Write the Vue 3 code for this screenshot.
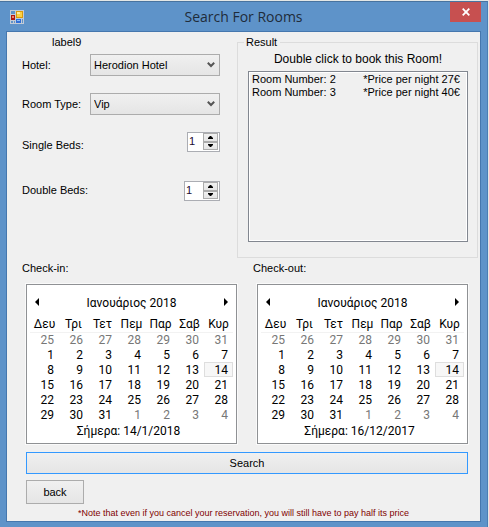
<script setup>
import { ref } from 'vue'

const hotel = ref('Herodion Hotel')
const roomType = ref('Vip')
const singleBeds = ref(1)
const doubleBeds = ref(1)
const chosenRoom = ref(null)

const gap = '\u00a0'.repeat(9)
const rooms = [
  { number: 2, price: 27 },
  { number: 3, price: 40 },
]

const weekdays = ['Δευ', 'Τρι', 'Τετ', 'Πεμ', 'Παρ', 'Σαβ', 'Κυρ']
const calendars = [
  { label: 'Check-in:', today: '14/1/2018' },
  { label: 'Check-out:', today: '16/12/2017' },
]

// January 2018 starts on a Monday, so the first row belongs to December.
const weeks = Array.from({ length: 6 }, (_, w) =>
  Array.from({ length: 7 }, (_, d) => {
    const n = w * 7 + d - 6
    if (n < 1) return { day: n + 31, other: true }
    if (n > 31) return { day: n - 31, other: true }
    return { day: n, other: false, selected: n === 14 }
  })
)
</script>

<template>
  <main class="window">
    <header class="titlebar">
      <svg class="app-icon" width="14" height="14" viewBox="0 0 14 14" aria-hidden="true">
        <rect width="14" height="14" fill="#c3cbd6" />
        <rect x="1" y="1" width="4" height="3" fill="#5f93c9" />
        <rect x="1" y="5" width="4" height="5" fill="#b01710" />
        <rect x="2" y="6" width="2" height="2" fill="#f0806a" />
        <rect x="6" y="1" width="7" height="7" fill="#d99a0c" />
        <rect x="7" y="2" width="5" height="5" fill="#fbd044" />
        <rect x="7" y="2" width="3" height="2" fill="#ffec9c" />
        <rect x="6" y="9" width="5" height="4" fill="#2f6fd8" />
        <rect x="7" y="10" width="3" height="1" fill="#8dbcf7" />
        <rect x="1" y="11" width="2" height="2" fill="#5f93c9" />
        <rect x="4" y="11" width="1" height="2" fill="#5f93c9" />
        <rect x="12" y="9" width="1" height="4" fill="#5f93c9" />
      </svg>
      <h1 class="title">Search For Rooms</h1>
      <button class="close" type="button" aria-label="Close">
        <svg width="8" height="8" viewBox="0 0 8 8" aria-hidden="true">
          <path d="M0.7 0.7 7.3 7.3M7.3 0.7 0.7 7.3" stroke="#fff" stroke-width="1.8" />
        </svg>
      </button>
    </header>

    <form class="client" @submit.prevent>
      <div class="top">
        <div class="filters">
          <p class="status">label9</p>
          <div class="field">
            <label for="hotel">Hotel:</label>
            <div class="combo">
              <select id="hotel" v-model="hotel">
                <option>Herodion Hotel</option>
              </select>
              <svg class="chevron" width="8" height="6" viewBox="0 0 8 6" aria-hidden="true">
                <path d="M0.8 0.8 4 4 7.2 0.8" fill="none" stroke="#555" stroke-width="2" />
              </svg>
            </div>
          </div>
          <div class="field">
            <label for="type">Room Type:</label>
            <div class="combo">
              <select id="type" v-model="roomType">
                <option>Vip</option>
              </select>
              <svg class="chevron" width="8" height="6" viewBox="0 0 8 6" aria-hidden="true">
                <path d="M0.8 0.8 4 4 7.2 0.8" fill="none" stroke="#555" stroke-width="2" />
              </svg>
            </div>
          </div>
          <div class="field beds">
            <label for="single">Single Beds:</label>
            <div class="spinner narrow">
              <input id="single" v-model.number="singleBeds" type="number" min="0" />
              <div class="steps">
                <button type="button" aria-label="More single beds" @click="singleBeds++">
                  <svg width="5" height="3" viewBox="0 0 5 3"><path d="M0 3V2L2 0h1l2 2v1z" /></svg>
                </button>
                <button type="button" aria-label="Fewer single beds" @click="singleBeds--">
                  <svg width="5" height="3" viewBox="0 0 5 3"><path d="M0 0v1l2 2h1l2-2V0z" /></svg>
                </button>
              </div>
            </div>
          </div>
          <div class="field beds">
            <label for="double">Double Beds:</label>
            <div class="spinner">
              <input id="double" v-model.number="doubleBeds" type="number" min="0" />
              <div class="steps">
                <button type="button" aria-label="More double beds" @click="doubleBeds++">
                  <svg width="5" height="3" viewBox="0 0 5 3"><path d="M0 3V2L2 0h1l2 2v1z" /></svg>
                </button>
                <button type="button" aria-label="Fewer double beds" @click="doubleBeds--">
                  <svg width="5" height="3" viewBox="0 0 5 3"><path d="M0 0v1l2 2h1l2-2V0z" /></svg>
                </button>
              </div>
            </div>
          </div>
        </div>

        <fieldset class="result">
          <legend>Result</legend>
          <label class="hint" for="rooms">Double click to book this Room!</label>
          <select id="rooms" v-model="chosenRoom" class="rooms" size="12">
            <option v-for="room in rooms" :key="room.number" :value="room.number">Room Number: {{ room.number }}{{ gap }}*Price per night {{ room.price }}€</option>
          </select>
        </fieldset>
      </div>

      <div class="calendars">
        <section v-for="cal in calendars" :key="cal.label" class="stay">
          <h2>{{ cal.label }}</h2>
          <div class="calendar">
            <div class="month">
              <button type="button" aria-label="Previous month">
                <svg width="4" height="8" viewBox="0 0 4 8"><path d="M4 0v8L0 4z" /></svg>
              </button>
              <span>Ιανουάριος 2018</span>
              <button type="button" aria-label="Next month">
                <svg width="4" height="8" viewBox="0 0 4 8"><path d="M0 0v8L4 4z" /></svg>
              </button>
            </div>
            <table>
              <thead>
                <tr>
                  <th v-for="d in weekdays" :key="d" scope="col">{{ d }}</th>
                </tr>
              </thead>
              <tbody>
                <tr v-for="(week, i) in weeks" :key="i">
                  <td
                    v-for="(cell, j) in week"
                    :key="j"
                    :class="{ other: cell.other, selected: cell.selected }"
                  >{{ cell.day }}</td>
                </tr>
              </tbody>
            </table>
            <p class="today">Σήμερα: {{ cal.today }}</p>
          </div>
        </section>
      </div>

      <div class="actions">
        <button class="btn search" type="submit">Search</button>
        <button class="btn back" type="button">back</button>
      </div>
      <p class="note">*Note that even if you cancel your reservation, you will still have to pay half its price</p>
    </form>
  </main>
</template>

<style>
body {
  margin: 0;
  background: #e4e7e6;
}
</style>

<style scoped>
* {
  box-sizing: border-box;
}

h1,
h2,
p {
  margin: 0;
  font-weight: 400;
}

.window {
  display: flex;
  flex-direction: column;
  min-height: calc(100vh - 1px);
  margin: 1px 1px 0 0;
  padding: 0 6px 5px;
  border-top: 1px solid #48739f;
  border-right: 1px solid #4a7db5;
  background: #5e93c9;
  color: #000;
  font: 11px/14px "Liberation Sans", Arial, sans-serif;
}

.titlebar {
  display: grid;
  grid-template-columns: 27px 1fr 31px;
  align-items: center;
  height: 29px;
  padding-left: 4px;
}

.title {
  color: #1f2c3a;
  font: 14px/20px "Open Sans", "Noto Sans", sans-serif;
  text-align: center;
}

.close {
  display: flex;
  align-items: center;
  justify-content: center;
  align-self: start;
  height: 20px;
  padding: 0;
  border: 0;
  background: #c75050;
}

.client {
  flex: 1;
  border: 1px solid #4577ae;
  background: #f0f0f0;
}

.top {
  display: grid;
  grid-template-columns: 230fr 243fr;
}

.filters {
  padding: 3px 17px 0 15px;
}

.status {
  padding-left: 30px;
}

.field {
  display: flex;
  align-items: center;
  justify-content: space-between;
  height: 22px;
  margin: 5px 0 17px;
}

.field + .field {
  margin-top: 0;
}

.combo {
  display: grid;
  align-items: center;
  width: 130px;
}

.combo > * {
  grid-area: 1 / 1;
}

.combo select {
  width: 100%;
  height: 22px;
  padding: 0 18px 0 3px;
  border: 1px solid #acacac;
  border-radius: 0;
  appearance: none;
  background: linear-gradient(#f0f0f0, #e5e5e5);
  color: inherit;
  font: inherit;
}

.chevron {
  justify-self: end;
  margin-right: 5px;
  pointer-events: none;
}

.beds {
  align-items: start;
  height: 20px;
  margin-bottom: 29px;
}

.beds label {
  padding-top: 6px;
}

.beds:last-child label {
  padding-top: 2px;
}

.spinner {
  display: flex;
  width: 36px;
  height: 20px;
  border: 1px solid #abadb3;
  background: #fff;
}

.spinner.narrow {
  width: 33px;
}

.spinner input {
  flex: 1;
  min-width: 0;
  height: 15px;
  padding: 0 0 0 1px;
  border: 0;
  background: none;
  appearance: textfield;
  color: #1c0a30;
  font: inherit;
}

.spinner input::-webkit-inner-spin-button {
  appearance: none;
}

.steps {
  display: grid;
  grid-template-rows: 1fr 1fr;
  width: 16px;
  padding: 0 1px 1px 0;
}

.steps button {
  display: flex;
  align-items: center;
  justify-content: center;
  padding: 0;
  border: 1px solid #acacac;
  background: linear-gradient(#f0f0f0, #e5e5e5);
}

.result {
  display: flex;
  flex-direction: column;
  min-width: 0;
  height: 223px;
  margin: 3px 2px 0 0;
  padding: 2px 9px 15px 10px;
  border: 1px solid #dcdcdc;
}

.result legend {
  margin-left: -4px;
  padding: 0 3px 0 2px;
}

.hint {
  padding-bottom: 4px;
  font-size: 12px;
  line-height: 16px;
  text-align: center;
}

.rooms {
  flex: 1;
  width: 100%;
  min-height: 0;
  padding: 1px;
  border: 1px solid #828790;
  border-radius: 0;
  outline: 0;
  background: #f0f0f0;
  box-shadow: inset 0 0 0 1px #fff;
  color: inherit;
  font: inherit;
  overflow: hidden;
}

.rooms option {
  min-height: 13px;
  padding: 0 2px;
  line-height: 13px;
}

.calendars {
  display: grid;
  grid-template-columns: 1fr 1fr;
  gap: 20px;
  padding: 3px 12px 0 19px;
}

.stay h2 {
  margin-left: -4px;
  padding-bottom: 9px;
  font-size: 11px;
  line-height: 14px;
}

.calendar {
  height: 160px;
  padding: 9px 3px 0;
  border: 1px solid #8f9194;
  background: #fff;
  font: 12px/15px Roboto, "Noto Sans", sans-serif;
  box-shadow: 0 0 0 1px #fafafa;
}

.month {
  display: flex;
  align-items: center;
  justify-content: space-between;
  height: 18px;
  padding: 0 5px;
}

.month button {
  display: flex;
  padding: 0 0 3px;
  border: 0;
  background: none;
}

table {
  width: 100%;
  margin-top: 5px;
  border-collapse: collapse;
  table-layout: fixed;
}

th,
td {
  height: 15px;
  padding: 0 5px 0 0;
  font-weight: 400;
  line-height: 14px;
  text-align: right;
}

th {
  padding: 0;
  border-bottom: 1px solid #f2f2f2;
  text-align: center;
}

.other {
  color: #777;
}

.selected {
  background: #f7f7f7;
  box-shadow: inset 0 0 0 1px #dedede;
}

.today {
  padding-right: 6px;
  line-height: 18px;
  text-align: center;
}

.actions {
  display: flex;
  flex-direction: column;
  align-items: start;
  gap: 6px;
  padding: 8px 12px 0 19px;
}

.btn {
  padding: 0;
  border: 1px solid #acacac;
  background: linear-gradient(#f0f0f0, #e5e5e5);
  color: inherit;
  font: inherit;
}

.search {
  width: 100%;
  height: 22px;
  border-color: #3399ff;
}

.back {
  width: 58px;
  height: 24px;
}

.note {
  padding: 3px 0 0;
  color: #800000;
  font-size: 9px;
  line-height: 12px;
  text-align: center;
}
</style>
